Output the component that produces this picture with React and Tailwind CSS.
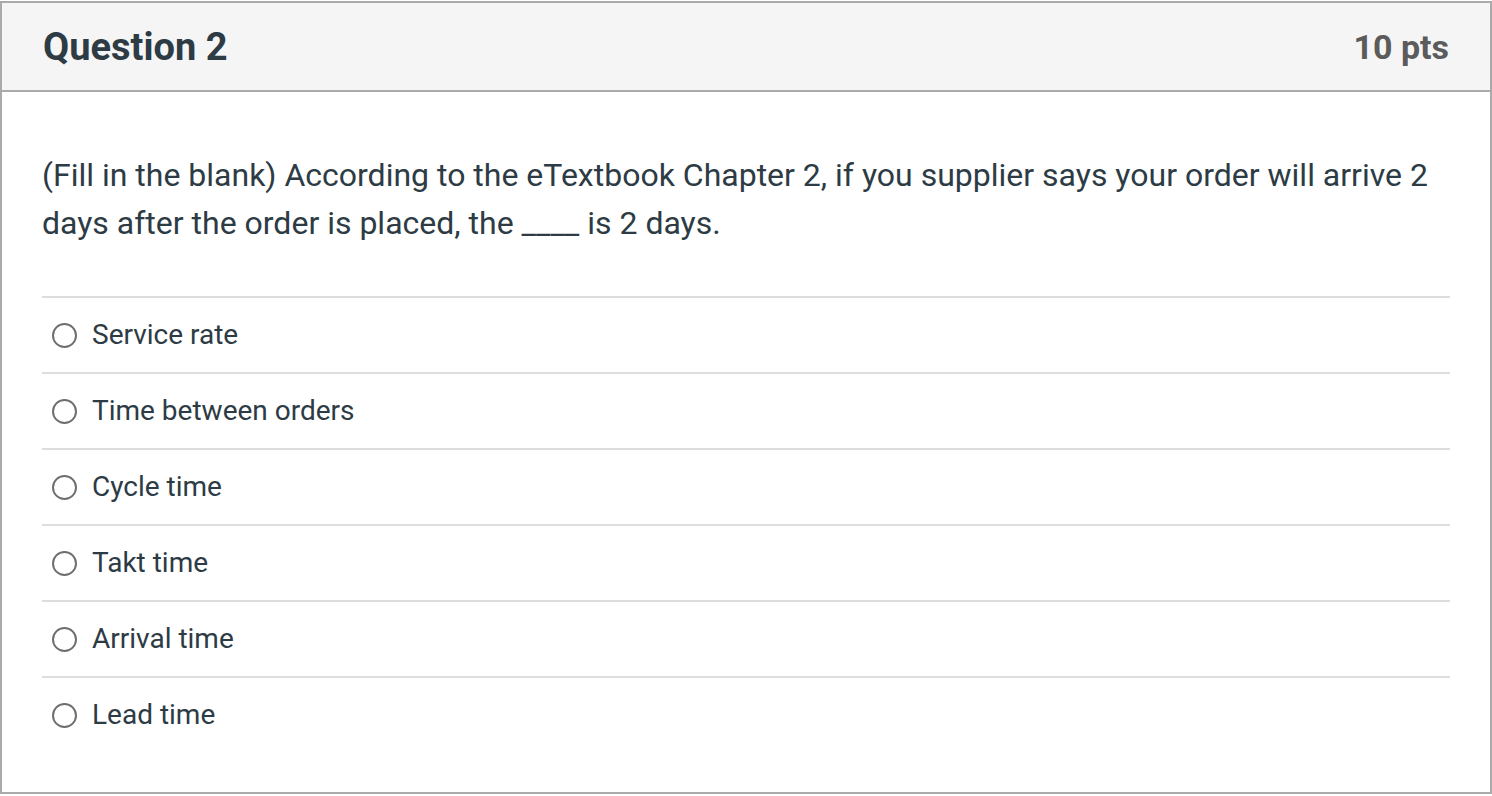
import React from 'react';

const answers = [
    'Service rate',
    'Time between orders',
    'Cycle time',
    'Takt time',
    'Arrival time',
    'Lead time',
];

const App = () => {
    return (
        <div className="bg-white pt-px" style={{ fontFamily: 'Roboto, "Liberation Sans", sans-serif' }}>
            <div className="border-2 border-[#aaaaaa] text-[#2d3b45]">
                <div className="flex items-center justify-between h-[89px] px-[41px] bg-[#f5f5f5] border-b-2 border-[#aaaaaa]">
                    <h2 className="text-[38px] font-bold leading-none">Question 2</h2>
                    <div className="text-[34px] font-bold leading-none text-[#5b5b5b]">10 pts</div>
                </div>
                <div className="px-[40px] pt-[59px] pb-[40px]">
                    <p className="text-[32px] leading-[48px]">
                        (Fill in the blank) According to the eTextbook Chapter 2, if you supplier says your order will arrive 2 days after the order is placed, the ____ is 2 days.
                    </p>
                    <div className="mt-[49px]">
                        {answers.map((a) => (
                            <label key={a} className="flex items-center h-[76px] border-t-2 border-[#dddddd] cursor-pointer">
                                <span className="ml-[10px] w-[25px] h-[25px] rounded-full border-2 border-[#6f6f6f] shrink-0" />
                                <span className="ml-[15px] text-[28px] leading-none">{a}</span>
                            </label>
                        ))}
                    </div>
                </div>
            </div>
        </div>
    );
};

export default App;
